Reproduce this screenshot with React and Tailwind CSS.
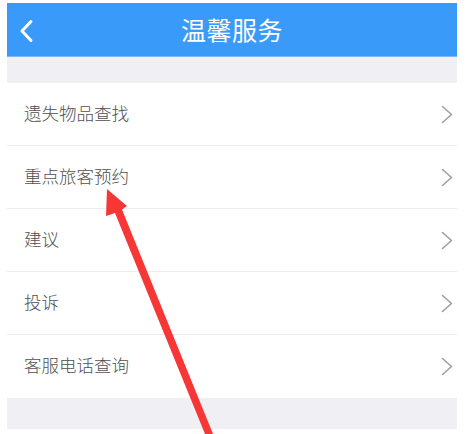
const ITEMS = ['遗失物品查找', '重点旅客预约', '建议', '投诉', '客服电话查询']

function Chevron() {
  return (
    <svg width="12" height="19" viewBox="0 0 12 19" fill="none" stroke="#a0a0a0" strokeWidth="1.6" strokeLinecap="round" strokeLinejoin="round">
      <path d="M1.5 1.5 L10.5 9.5 L1.5 17.5" />
    </svg>
  )
}

export default function App() {
  return (
    <div
      className="relative w-[468px] h-[434px] bg-white pl-[7px] pt-[3px] overflow-hidden"
      style={{ fontFamily: '"Noto Sans CJK SC", "Noto Sans", sans-serif' }}
    >
      <div className="w-[450px]">
        {/* Header */}
        <div className="relative h-[54px] bg-[#3a9afa] border-b border-[#7ab9f5] flex items-center justify-center">
          <svg
            className="absolute left-[12px] top-[16px]"
            width="16"
            height="24"
            viewBox="0 0 16 24"
            fill="none"
            stroke="white"
            strokeWidth="3"
            strokeLinecap="round"
            strokeLinejoin="round"
          >
            <path d="M12 2.5 L3 12 L12 21.5" />
          </svg>
          <span className="text-[25px] text-white leading-none tracking-[0.5px]">温馨服务</span>
        </div>

        {/* Gap */}
        <div className="h-[26px] bg-[#efeff4]" />

        {/* List */}
        <div className="bg-white">
          {ITEMS.map((item, i) => (
            <div
              key={item}
              className={`h-[63px] flex items-center justify-between pl-[17px] pr-[4px] ${
                i < ITEMS.length - 1 ? 'border-b border-[#ececec]' : ''
              }`}
            >
              <span className="text-[17.5px] text-[#505050] font-light leading-none -mt-[3px]">{item}</span>
              <Chevron />
            </div>
          ))}
        </div>

        {/* Bottom gray */}
        <div className="h-[31px] bg-[#efeff4]" />
      </div>

      {/* Red arrow annotation */}
      <svg className="absolute left-0 top-0 pointer-events-none" width="468" height="434">
        <polygon
          points="107,189 127,206 122,209.5 213,434 205,434 115,213 106,216"
          fill="#f73636"
        />
      </svg>
    </div>
  )
}
